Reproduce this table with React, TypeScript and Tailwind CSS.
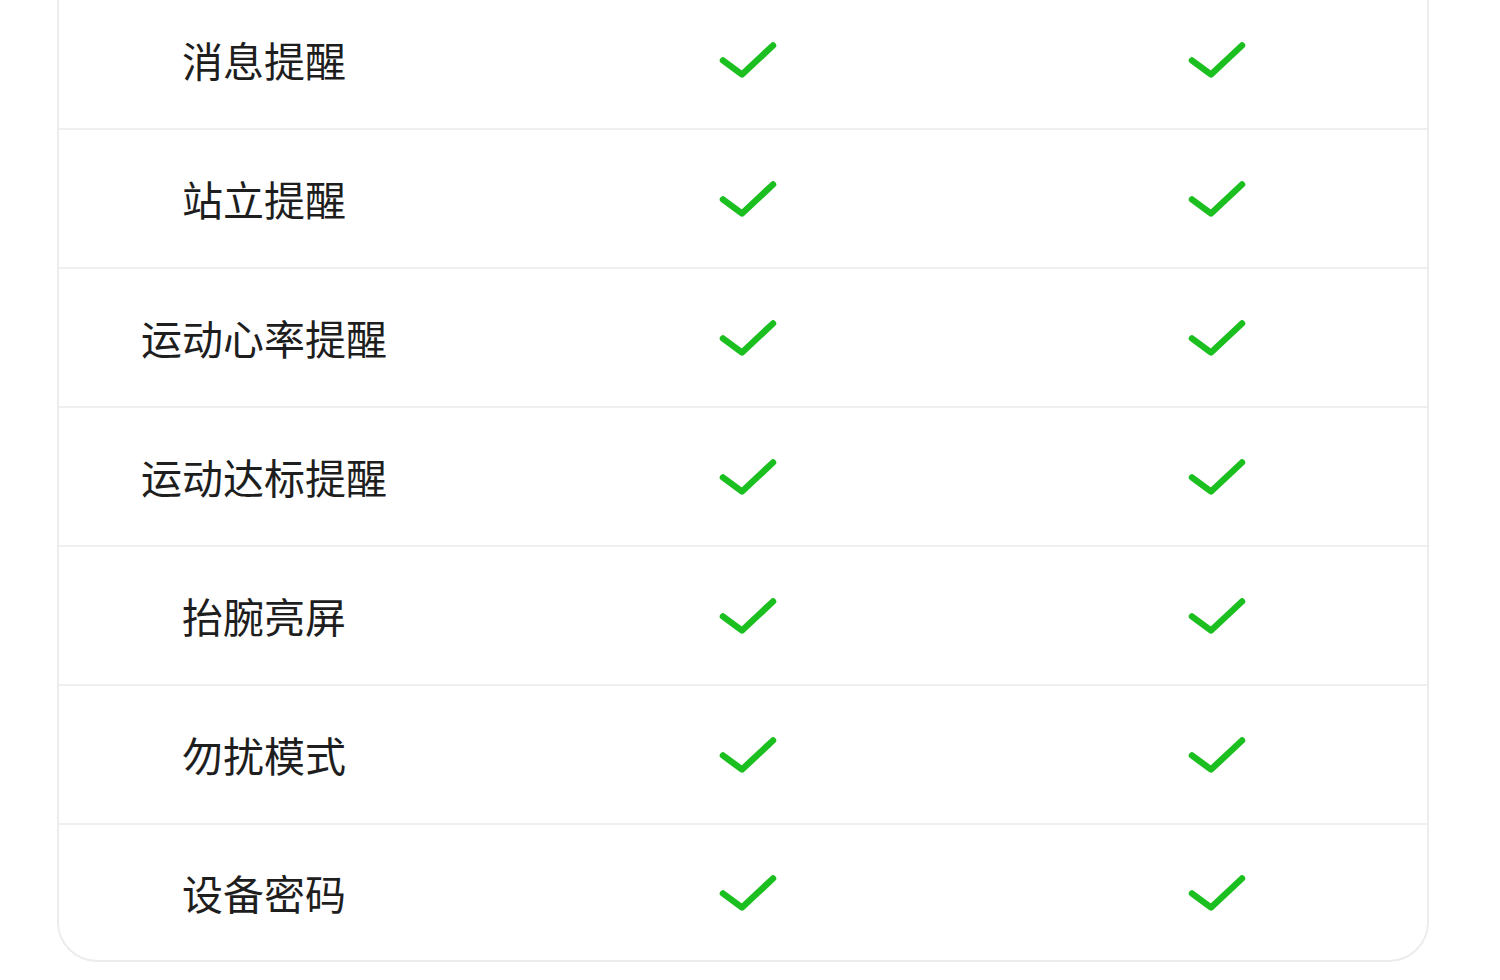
import React from "react";

const FEATURES = ["消息提醒", "站立提醒", "运动心率提醒", "运动达标提醒", "抬腕亮屏", "勿扰模式", "设备密码"];

function Check() {
  return (
    <svg width="60" height="40" viewBox="0 0 60 40" fill="none" aria-hidden>
      <path
        d="M5 20.5 L24 34.5 L55 5.5"
        stroke="#1cbf20"
        strokeWidth="6.5"
        strokeLinecap="round"
        strokeLinejoin="round"
      />
    </svg>
  );
}

export default function App() {
  return (
    <div className="min-h-[980px] w-[1500px] bg-white overflow-hidden">
      <div className="ml-[57px] -mt-[11px] w-[1372px] rounded-b-[40px] border-2 border-[#ececec] bg-white">
        {FEATURES.map((name, i) => (
          <div
            key={name}
            className={
              "grid grid-cols-[410px_558px_380px_1fr] items-center " +
              (i < FEATURES.length - 1 ? "h-[139px] border-b-2 border-[#efefef]" : "h-[135px]")
            }
          >
            <div
              className="text-center text-[41px] leading-none text-[#1e1e1e]"
              style={{ fontFamily: '"Noto Sans CJK SC", "Noto Sans", sans-serif' }}
            >
              {name}
            </div>
            <div className="flex justify-center">
              <Check />
            </div>
            <div className="flex justify-center">
              <Check />
            </div>
            <div />
          </div>
        ))}
      </div>
    </div>
  );
}
